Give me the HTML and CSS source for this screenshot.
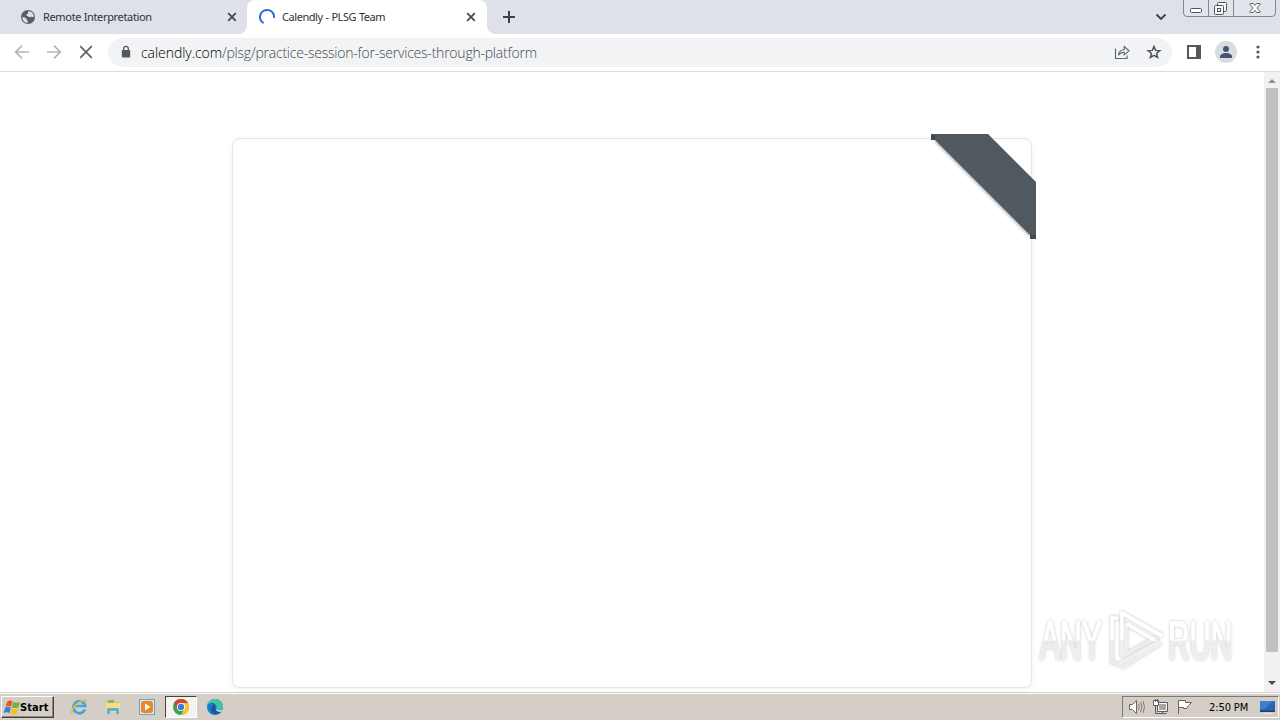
FILE: index.html
```html
<!DOCTYPE html>
<html lang="en">
<head>
<meta charset="utf-8">
<title>Calendly - PLSG Team</title>
<link rel="stylesheet" href="styles.css">
</head>
<body>
<div class="screen">
  <header class="tabstrip">
    <div class="tab">
      <svg class="favicon" width="16" height="16" viewBox="0 0 16 16"><circle cx="8" cy="8" r="7" fill="#5a5e63"/><path d="M2.200 8.400c1.500-.2 3 .1 4 1 .8.7.3 1.700 1.200 2.100.7.3.6 1.300.3 2.300C4.800 13.700 2.300 11.300 2.200 8.400zM8.300 2.200c2.300 0 4 1.200 5 3l.6 2.500c-1.500.7-2.400-.2-3.300.3-.8.4-1.700.2-2.300-.6-.6-.8-2.200-.4-2.100-1.600.1-.9 1.300-.7 1.700-1.400.3-.7-.1-1.400.4-2.200z" fill="#dee1e8"/></svg>
      <span class="tab-title title-remote">Remote Interpretation</span>
      <svg class="tab-close" width="10" height="10" viewBox="0 0 10 10"><path d="M1.200 1.200l7.600 7.600M8.800 1.200L1.200 8.800" stroke="#45484c" stroke-width="1.800"/></svg>
    </div>
    <div class="tab tab-active">
      <svg class="favicon" width="18" height="18" viewBox="0 0 18 18"><path d="M5.600 15.200A7.100 7.100 0 1 1 16.100 10" fill="none" stroke="#2b6bd4" stroke-width="2"/></svg>
      <span class="tab-title title-calendly">Calendly - PLSG Team</span>
      <svg class="tab-close" width="10" height="10" viewBox="0 0 10 10"><path d="M1.200 1.200l7.600 7.600M8.800 1.200L1.200 8.800" stroke="#45484c" stroke-width="1.800"/></svg>
    </div>
    <svg class="new-tab" width="12" height="12" viewBox="0 0 12 12"><path d="M6 0v12M0 6h12" stroke="#3c4043" stroke-width="2"/></svg>
    <svg class="tab-search" width="12" height="8" viewBox="0 0 12 8"><path d="M1.500 1.500L6 6l4.500-4.500" fill="none" stroke="#3c4043" stroke-width="1.900"/></svg>
    <svg class="window-buttons" width="94" height="18" viewBox="0 0 94 18"><path d="M.5 0v13q0 3.500 3.500 3.500h85q3.500 0 3.500-3.500V0M25.500 0v16M50.500 0v16" fill="#e1e4ea" stroke="#83878f"/>
      <rect x="7.500" y="8.500" width="11" height="4" rx="1" fill="#fff" stroke="#50545b"/>
      <g fill="#f5f6f8" stroke="#50545b"><rect x="34.500" y="2.500" width="9" height="9" rx="1"/><rect x="31.500" y="5.500" width="9" height="9" rx="1"/><rect x="34.500" y="8.500" width="3" height="3"/></g>
      <path d="M67 3.500h3.300l1.700 2 1.700-2H77v1L73.900 8 77 11.500v1h-3.300L72 10.300l-1.700 2.200H67v-1L70.100 8 67 4.500z" fill="#fff" stroke="#50545b" stroke-width=".9"/></svg>
  </header>

  <nav class="toolbar">
    <div class="nav-buttons">
      <svg width="16" height="16" viewBox="0 0 16 16"><path d="M15 8H2M8 1.700L1.700 8 8 14.300" fill="none" stroke="#b2b4b7" stroke-width="1.700"/></svg>
      <svg width="16" height="16" viewBox="0 0 16 16"><path d="M1 8h13M8 1.700L14.300 8 8 14.300" fill="none" stroke="#b2b4b7" stroke-width="1.700"/></svg>
      <svg width="16" height="16" viewBox="0 0 16 16"><path d="M2.200 2.200l11.600 11.600M13.800 2.200L2.200 13.800" stroke="#5f6368" stroke-width="1.700"/></svg>
    </div>
    <div class="omnibox">
      <svg width="10" height="14" viewBox="0 0 10 14"><rect x=".8" y="5" width="8.400" height="7.500" rx="1" fill="#55585d"/><path d="M2.700 5.500V3.600a2.300 2.300 0 0 1 4.600 0v1.900" fill="none" stroke="#55585d" stroke-width="1.300"/></svg>
      <span class="url"><span class="host">calendly.com</span>/plsg/practice-session-for-services-through-platform</span>
      <svg class="share" width="16" height="16" viewBox="0 0 16 16"><path d="M1.500 4.500v10h11.500v-3M4.500 11.200c.4-3.700 2.500-5.400 5.700-5.500V2.500L15 6.800l-4.800 4V8.300c-2.500 0-4.300.8-5.700 2.900z" fill="none" stroke="#5f6368" stroke-width="1.100"/></svg>
      <svg width="16" height="16" viewBox="0 0 16 16"><path d="M8 2.500l1.600 3.900 4.200.3-3.200 2.700 1 4.100L8 11.300l-3.600 2.200 1-4.100-3.200-2.700 4.200-.3z" fill="none" stroke="#4e5257" stroke-width="1.500"/></svg>
    </div>
    <svg class="side-panel" width="14" height="14" viewBox="0 0 14 14"><path d="M0 0h14v14H0zM2 2v10h7V2z" fill="#55585d" fill-rule="evenodd"/></svg>
    <svg class="avatar" width="22" height="22" viewBox="0 0 22 22"><circle cx="11" cy="11" r="11" fill="#d9dce1"/><circle cx="11" cy="8" r="3" fill="#465471"/><path d="M5 17v-1.500c0-2.300 3-3.500 6-3.500s6 1.200 6 3.500V17z" fill="#465471"/></svg>
    <svg class="more" width="4" height="14" viewBox="0 0 4 14"><g fill="#55585d"><circle cx="2" cy="2" r="1.600"/><circle cx="2" cy="7" r="1.600"/><circle cx="2" cy="12" r="1.600"/></g></svg>
  </nav>

  <main class="page">
    <div class="viewport">
      <section class="card">
        <svg class="ribbon" width="112" height="112" viewBox="0 0 112 112">
          <defs><filter id="soft" x="-10%" y="-10%" width="120%" height="120%"><feGaussianBlur stdDeviation="1.800"/></filter></defs>
          <path d="M8 7L104 103V95L16 5z" fill="#777" opacity=".55" filter="url(#soft)"/>
          <path d="M5 0h57l48 48v57h-6v-4L9 6H5z" fill="#50595f"/>
          <path d="M5 1h4v5H5zM104 101h6v4h-6z" fill="#434a4e"/>
        </svg>
      </section>
      <svg class="watermark" width="216" height="72" viewBox="0 0 216 72">
        <defs>
          <linearGradient id="fade" gradientUnits="userSpaceOnUse" x1="0" y1="-38" x2="0" y2="2"><stop offset="0" stop-color="#fff"/><stop offset=".48" stop-color="#fff"/><stop offset=".5" stop-color="#ececec"/><stop offset="1" stop-color="#f0f0f0"/></linearGradient>
          <filter id="halo" x="-10%" y="-20%" width="120%" height="140%"><feDropShadow dx="0" dy="0" stdDeviation="1.500" flood-color="#777" flood-opacity=".45"/></filter>
        </defs>
        <g filter="url(#halo)">
          <g transform="translate(6 53) scale(.6 1)"><text class="mark" x="0" y="0" textLength="103" lengthAdjust="spacingAndGlyphs">ANY</text></g>
          <g transform="translate(134 53) scale(.6 1)"><text class="mark" x="0" y="0" textLength="107" lengthAdjust="spacingAndGlyphs">RUN</text></g>
          <g fill="none" stroke-width="3.500" stroke-linejoin="round">
            <path d="M85 13L78 11v45l7 3M88 8v42L127 29M84 57l5 4 38-24" stroke="#ededed"/>
            <path d="M88 50V7l40 22M92 48V18l32 18-38 22" stroke="#f0f0f0"/>
            <path d="M78 34V12h6M88 34V7l40 23M93 18l27 16" stroke="#fff"/>
          </g>
        </g>
      </svg>
    </div>
    <aside class="scrollbar">
      <svg width="16" height="16" viewBox="0 0 16 16"><path d="M4 11l4-4 4 4z" fill="#929292"/></svg>
      <div class="thumb"></div>
      <svg class="scroll-down" width="16" height="16" viewBox="0 0 16 16"><path d="M4 5h8L8 9z" fill="#484848"/></svg>
    </aside>
  </main>

  <footer class="taskbar">
    <button class="start">
      <svg width="18" height="17" viewBox="0 0 18 17"><path d="M4 3q3-2.500 5.500-.8L8 7.800Q5.500 6 2.500 7.800z" fill="#e25b25"/><path d="M10.300 2.800q3 1.700 6.700 0L15.500 8.200q-3 1.700-6.700 0z" fill="#72b33f"/><path d="M2.200 8.700Q5.500 7 7.800 8.700l-1.500 5.500Q4 12.500.7 14z" fill="#3c7fce"/><path d="M8.500 9.200q3 1.700 6.700 0l-1.500 5.500q-3 1.700-6.700 0z" fill="#f5be24"/></svg>
      <span>Start</span>
    </button>
    <div class="launchers">
      <span class="launcher"><svg width="18" height="18" viewBox="0 0 18 18"><path d="M15 11.500a6 6 0 1 1 .3-3.500H5" fill="none" stroke="#41a5e2" stroke-width="2.700"/><path d="M3 16C-1 16 3 8 9 4.500c4-2.600 8-3.600 7-.5" fill="none" stroke="#e5bc45" stroke-width="1.500"/></svg></span>
      <span class="launcher"><svg width="18" height="18" viewBox="0 0 18 18"><path d="M2 3h5l1 1h8v5H2z" fill="#e8c35c"/><path d="M4 2h6v3H4z" fill="#7dbc62"/><path d="M2 5h14v9H2z" fill="#f3dc8c"/><path d="M3 16v-5q0-1 1-1h10q1 0 1 1v5h-3v-3H6v3z" fill="#62afd4"/></svg></span>
      <span class="launcher"><svg width="18" height="18" viewBox="0 0 18 18"><path d="M1 1h16v16H1z" fill="#62a5d5"/><path d="M2 2h14v14H2z" fill="#d2e8f6"/><rect x="3" y="3" width="12" height="12" rx="3" fill="#ee8719"/><path d="M7 5.500L12.500 9 7 12.500z" fill="#fff"/></svg></span>
      <span class="launcher launcher-active"><svg width="18" height="18" viewBox="0 0 18 18"><circle cx="9" cy="9" r="8" fill="#35a255"/><path d="M2.070 5A8 8 0 0 1 15.930 5H9l-3.460 6z" fill="#dc4233"/><path d="M15.930 5A8 8 0 0 1 9 17l3.460-6L9 5z" fill="#f8c52c"/><circle cx="9" cy="9" r="4.100" fill="#fff"/><circle cx="9" cy="9" r="3.200" fill="#3d78dd"/></svg></span>
      <span class="launcher"><svg width="18" height="18" viewBox="0 0 18 18"><circle cx="9" cy="9" r="8" fill="#187cc5"/><path d="M1.200 7C3-1 15-1 17 8c.5 4-4.500 5-7 3 2-3-1-6-4-6-2 0-4 1-4.800 2z" fill="#43c4aa"/><path d="M2 6c4-2.500 8 0 7.500 3.500-.8 2 .5 4.500 5.500 4-3 4-10 3-10-2C5 8.500 7 7 8 7 6 5 4 5 2 6z" fill="#1555a4"/><path d="M10 11c2 2 5 1.500 7 0l-1.500 2.500C12 14.500 10 13 10 11z" fill="#d7e7ee"/></svg></span>
    </div>
    <div class="tray">
      <svg width="18" height="16" viewBox="0 0 18 16"><path d="M1.500 5.500h3l4-4v13l-4-4h-3z" fill="#fff" stroke="#6b6965"/><path d="M10.500 5q1.500 3 0 6M12.500 3q3 5 0 10M15 2q3 6 0 12" fill="none" stroke="#817d77"/></svg>
      <svg width="18" height="16" viewBox="0 0 18 16"><path d="M5.500 3.500h10v9h-10z" fill="#a9a7a4" stroke="#5d5b58"/><path d="M6.500 4.500h8v7h-8z" fill="none" stroke="#fff"/><path d="M1.500 1.500h5v5h-5z" fill="#fff" stroke="#5d5b58"/><path d="M3.500 7v7.500h11M3.500 0v3M5.500 0v3M10.500 13v2" fill="none" stroke="#5d5b58"/></svg>
      <svg width="18" height="16" viewBox="0 0 18 16"><path d="M2.500 15V1.500h7v2h6l-3 3 -2 3h-3V8.500h-5" fill="#fff" stroke="#66635f"/></svg>
      <span class="clock">2:50 PM</span>
      <svg class="show-desktop" width="17" height="16" viewBox="0 0 17 16"><path d="M1 2h15v10H1z" fill="#2466b2"/><path d="M1 2h15Q10 4 7 9L1 11z" fill="#3c80cb"/><path d="M1 11.500h15V13H1z" fill="#244062"/><path d="M5 14h8v1H5z" fill="#dfe4e9"/></svg>
    </div>
  </footer>
</div>
</body>
</html>
```
FILE: styles.css
```css
* { box-sizing: border-box; }
body { margin: 0; overflow: hidden; font-family: "Noto Sans", sans-serif; }
svg { display: block; flex: none; }
.screen { width: 1280px; height: 720px; display: flex; flex-direction: column; background: #fff; }
.tabstrip { height: 34px; flex: none; display: flex; align-items: center; background: #dee1e8; }
.tab { height: 34px; width: 247px; padding: 0 10px 0 20px; display: flex; align-items: center; color: #303336; border-radius: 0 0 8px 0; }
.tab-active { width: 240px; padding: 0 11px 0 11px; background: #fff; border-radius: 8px 8px 0 0; position: relative; }
.tab-active::before, .tab-active::after { content: ""; position: absolute; bottom: 0; width: 8px; height: 8px; }
.tab-active::before { left: -8px; background: radial-gradient(circle at 0 0, transparent 7.500px, #fff 8px); }
.tab-active::after { right: -8px; background: radial-gradient(circle at 100% 0, transparent 7.500px, #fff 8px); }
.tab-title { margin-left: 7px; font-size: 11px; line-height: 16px; white-space: nowrap; }
.tab-active .tab-title { margin-left: 6px; }
.title-remote { letter-spacing: -0.340px; }
.title-calendly { letter-spacing: -0.440px; word-spacing: 0.400px; }
.tab-close { margin-left: auto; }
.new-tab { margin-left: 16px; }
.tab-search { margin-left: auto; }
.window-buttons { align-self: flex-start; margin: 0 3px 0 16px; }
.toolbar { height: 38px; flex: none; display: flex; align-items: center; padding: 0 20px 1px 14px; border-bottom: 1px solid #d9dbde; }
.nav-buttons { display: flex; gap: 16px; }
.omnibox { width: 1064px; flex: none; height: 29px; margin-left: 14px; padding: 0 10px 0 13px; border-radius: 15px; background: #f1f3f4; display: flex; align-items: center; }
.url { margin-left: 10px; font-family: "Open Sans", "Noto Sans", sans-serif; font-weight: 300; font-size: 14px; letter-spacing: -0.225px; color: #45494e; white-space: nowrap; }
.host { color: #000; letter-spacing: -0.060px; }
.share { margin: 0 16px 0 auto; }
.side-panel { margin-left: 15px; }
.avatar { margin-left: 14px; }
.more { margin-left: 19px; }
.page { height: 620px; flex: none; display: flex; }
.viewport { position: relative; flex: 1; padding: 66px 232px 4px; }
.card { position: relative; width: 800px; height: 550px; border: 1px solid #e5e5e5; border-radius: 8px; box-shadow: 0 1px 7px rgba(0,0,0,.06); background: #fff; }
.ribbon { position: absolute; top: -5px; right: -7px; }
.watermark { position: absolute; left: 1034px; top: 534px; }
.mark { font: 400 53px "Liberation Sans", sans-serif; fill: url(#fade); stroke: url(#fade); stroke-width: 1.500px; }
.scrollbar { width: 16px; background: #f1f1f1; display: flex; flex-direction: column; align-items: center; }
.thumb { width: 12px; height: 564px; background: #c1c1c1; }
.scroll-down { margin-top: auto; }
.taskbar { height: 28px; flex: none; display: flex; align-items: center; padding: 1px 1px 0; background: #d4cec6; border-top: 1px solid #d4d0c8; box-shadow: inset 0 1px #fff; }
.start { width: 53px; height: 22px; padding: 0 1px; display: flex; align-items: center; border: 1px solid; border-color: #fff #45423e #45423e #fff; box-shadow: inset -1px -1px #8b867e; background: #d4cec6; font: 700 11px "DejaVu Sans Condensed", "DejaVu Sans", sans-serif; letter-spacing: 0.100px; color: #000; }
.start span { margin-left: -1px; }
.launchers { display: flex; gap: 2px; margin-left: 9px; }
.launcher { width: 32px; height: 22px; display: flex; align-items: center; justify-content: center; }
.launcher-active { background: #f5f3f0; border: 1px solid; border-color: #45423e #fff #fff #45423e; }
.tray { width: 157px; height: 22px; margin-left: auto; padding-left: 5px; display: flex; align-items: center; gap: 6px; border: 1px solid; border-color: #7d7870 #fff #fff #7d7870; }
.clock { width: 43px; margin-left: 9px; font: 11px "DejaVu Sans Condensed", "DejaVu Sans", sans-serif; letter-spacing: -0.100px; color: #000; white-space: nowrap; }
.show-desktop { margin-left: 1px; }
```
